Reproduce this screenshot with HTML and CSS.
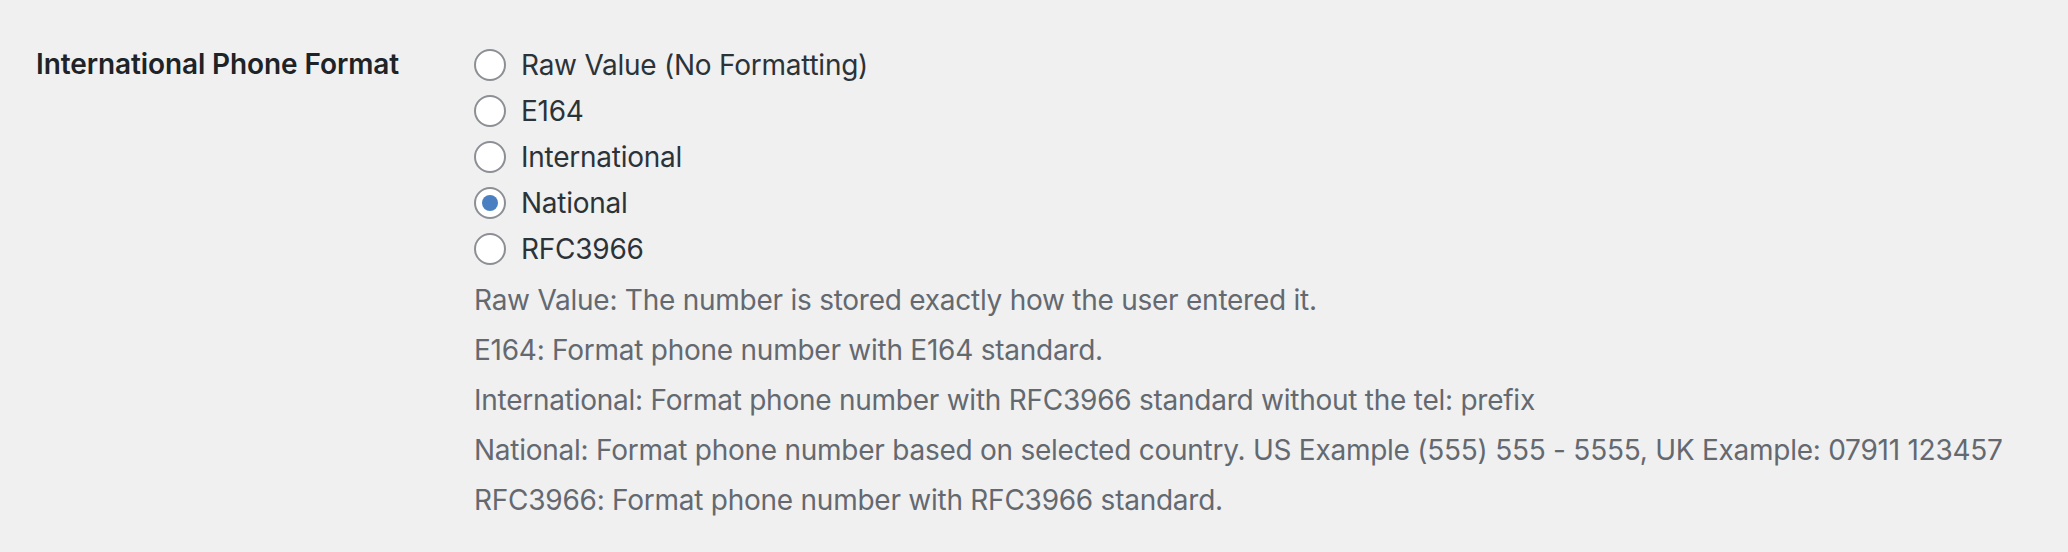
FILE: index.html
```html
<!DOCTYPE html>
<html lang="en">
<head>
<meta charset="utf-8">
<title>International Phone Format</title>
<link rel="stylesheet" href="styles.css">
</head>
<body>
<div class="form-row">
  <div class="field-label">International Phone Format</div>
  <div class="field-control">
    <fieldset class="radio-list">
      <label class="radio-item"><span class="radio"></span><span class="radio-text">Raw Value (No Formatting)</span></label>
      <label class="radio-item"><span class="radio"></span><span class="radio-text">E164</span></label>
      <label class="radio-item"><span class="radio"></span><span class="radio-text">International</span></label>
      <label class="radio-item"><span class="radio checked"></span><span class="radio-text">National</span></label>
      <label class="radio-item"><span class="radio"></span><span class="radio-text">RFC3966</span></label>
    </fieldset>
    <p class="description">Raw Value: The number is stored exactly how the user entered it.</p>
    <p class="description">E164: Format phone number with E164 standard.</p>
    <p class="description">International: Format phone number with RFC3966 standard without the tel: prefix</p>
    <p class="description">National: Format phone number based on selected country. US Example (555) 555 - 5555, UK Example: 07911 123457</p>
    <p class="description">RFC3966: Format phone number with RFC3966 standard.</p>
  </div>
</div>
</body>
</html>
```
FILE: styles.css
```css
html, body {
  margin: 0;
  padding: 0;
  background: #f0f0f1;
}
body {
  font-family: Inter, "Noto Sans", sans-serif;
  font-size: 28px;
  letter-spacing: -0.25px;
  color: #2c3338;
}
.form-row {
  display: grid;
  grid-template-columns: 438px 1fr;
  padding: 41px 0 0 36px;
}
.field-label {
  font-weight: 600;
  color: #1d2327;
  line-height: 46px;
  letter-spacing: -0.1px;
}
.field-control {
  display: flex;
  flex-direction: column;
}
.radio-list {
  border: 0;
  margin: 1px 0 0;
  padding: 0;
  display: flex;
  flex-direction: column;
}
.radio-item {
  display: flex;
  align-items: center;
  height: 46px;
  gap: 15px;
}
.radio {
  width: 32px;
  height: 32px;
  box-sizing: border-box;
  border: 2px solid #8c8f94;
  border-radius: 50%;
  background: #fff;
  display: flex;
  align-items: center;
  justify-content: center;
  flex: none;
}
.radio.checked::before {
  content: "";
  width: 16px;
  height: 16px;
  border-radius: 50%;
  background: #4a80c2;
}
.radio-text {
  line-height: 46px;
  color: #2c3338;
}
.description {
  margin: 8px 0 0;
  line-height: 42px;
  color: #646970;
}
.radio-list + .description {
  margin-top: 7px;
}
```
